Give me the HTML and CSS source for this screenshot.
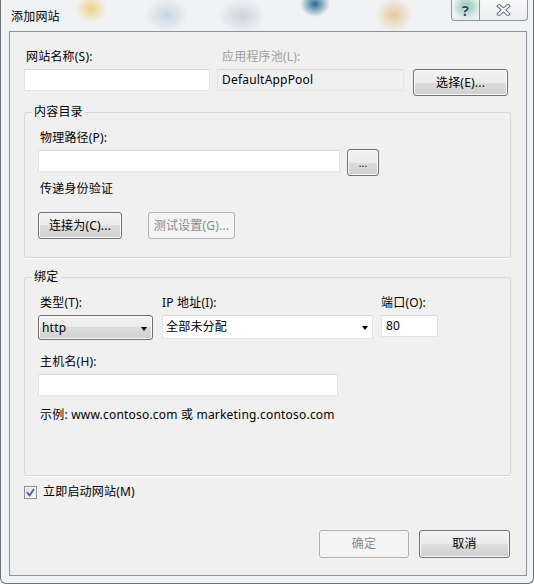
FILE: index.html
```html
<!DOCTYPE html>
<html lang="zh-CN">
<head>
<meta charset="utf-8">
<title>添加网站</title>
<link rel="stylesheet" href="styles.css">
</head>
<body>
<div class="window">
  <div class="titlebar">
    <span class="title">添加网站</span>
    <div class="caption-btns">
      <span class="cb help">?</span>
      <span class="cb close">
        <svg width="15" height="12" viewBox="0 0 15 12"><path d="M3 2 L12 10 M12 2 L3 10" stroke="#66707c" stroke-width="4" stroke-linecap="square" fill="none"/><path d="M3 2 L12 10 M12 2 L3 10" stroke="#ffffff" stroke-width="2" stroke-linecap="square" fill="none"/></svg>
      </span>
    </div>
  </div>
  <div class="client">
    <div class="top-grid">
      <label class="lbl l1">网站名称(S):</label>
      <label class="lbl l2 disabled">应用程序池(L):</label>
      <span></span>
      <div class="input"></div>
      <div class="input readonly">DefaultAppPool</div>
      <button class="btn select-btn">选择(E)...</button>
    </div>

    <div class="group g1">
      <div class="gh"><span>内容目录</span></div>
      <div class="gb">
        <div class="lbl ind">物理路径(P):</div>
        <div class="path-row">
          <div class="input path"></div>
          <button class="btn dots">...</button>
        </div>
        <div class="lbl ind pass">传递身份验证</div>
        <div class="btn-row">
          <button class="btn connect">连接为(C)...</button>
          <button class="btn test" disabled>测试设置(G)...</button>
        </div>
      </div>
    </div>

    <div class="group g2">
      <div class="gh"><span>绑定</span></div>
      <div class="gb">
        <div class="bind-grid">
          <div class="lbl ind">类型(T):</div>
          <div class="lbl">IP 地址(I):</div>
          <div class="lbl">端口(O):</div>
          <div class="combo type"><span>http</span><i class="arrow"></i></div>
          <div class="combo ip"><span>全部未分配</span><i class="arrow"></i></div>
          <div class="input port">80</div>
        </div>
        <div class="lbl ind host-lbl">主机名(H):</div>
        <div class="input host"></div>
        <div class="lbl ind example">示例: www.contoso.com 或 marketing.contoso.com</div>
      </div>
    </div>

    <div class="check-row">
      <span class="checkbox"><svg width="9" height="9" viewBox="0 0 9 9"><path d="M1 4.2 L3.6 7.4 L8 1" stroke="#4a5f96" stroke-width="1.8" fill="none"/></svg></span>
      <span class="lbl">立即启动网站(M)</span>
    </div>

    <div class="footer">
      <button class="btn ok" disabled>确定</button>
      <button class="btn cancel">取消</button>
    </div>
  </div>
</div>
</body>
</html>
```

FILE: styles.css
```css
* { box-sizing: border-box; }
html, body { margin: 0; padding: 0; background: #f2f3f4; }
body {
  font-family: "Noto Sans", "Noto Sans CJK SC", sans-serif;
  font-size: 12px;
  line-height: 16px;
  letter-spacing: 0.2px;
  color: #000;
}
.window {
  width: 534px;
  height: 584px;
  border: 1px solid #6e737a;
  border-top: none;
  border-radius: 0 0 6px 6px;
  padding: 0 6px 7px 8px;
  display: flex;
  flex-direction: column;
  background:
    radial-gradient(ellipse 16px 14px at 90px 9px, rgba(238,196,90,.7), rgba(238,196,90,0)),
    radial-gradient(ellipse 22px 17px at 166px 15px, rgba(168,188,212,.55), rgba(168,188,212,0)),
    radial-gradient(ellipse 24px 17px at 241px 16px, rgba(172,188,208,.55), rgba(172,188,208,0)),
    radial-gradient(ellipse 15px 13px at 314px 4px, rgba(18,92,132,.9), rgba(18,92,132,0)),
    radial-gradient(ellipse 19px 17px at 393px 15px, rgba(222,166,84,.55), rgba(222,166,84,0)),
    radial-gradient(ellipse 15px 15px at 466px 6px, rgba(60,160,120,.65), rgba(60,160,120,0)),
    #f1f2f4;
}
.titlebar {
  height: 31px;
  display: flex;
  align-items: flex-start;
  flex: none;
}
.title {
  padding-top: 9px;
  padding-left: 2px;
  line-height: 16px;
  color: #000;
}
.caption-btns {
  margin-left: auto;
  margin-right: -1px;
  display: flex;
  height: 21px;
  border: 1px solid #8d959f;
  border-top: none;
  border-radius: 0 0 4px 4px;
  overflow: hidden;
  background: linear-gradient(rgba(255,255,255,.55), rgba(230,234,238,.55));
}
.cb {
  display: flex;
  align-items: center;
  justify-content: center;
}
.help {
  width: 28px;
  border-right: 1px solid #8d959f;
  font-weight: bold;
  font-size: 15px;
  color: #2f4760;
  text-shadow: 0 0 2px #fff, 0 0 1px #fff;
  background: radial-gradient(ellipse 14px 12px at 14px 6px, rgba(80,170,140,.45), rgba(80,170,140,0));
}
.close { width: 47px; }

.client {
  height: 545px;
  border: 1px solid #8a929c;
  background: #f0f0f0;
  padding: 17px 15px 0 14px;
  display: flex;
  flex-direction: column;
}
.lbl { line-height: 16px; white-space: nowrap; }
.disabled { color: #a0a0a0; }

.top-grid {
  display: grid;
  grid-template-columns: 186px 187px 97px;
  column-gap: 7px;
  row-gap: 4px;
  align-items: start;
}
.top-grid .select-btn { margin-left: 2px; }
.l1 { padding-left: 2px; }
.l2 { padding-left: 5px; }

.input {
  height: 22px;
  background: #fff;
  border: 1px solid #e2e3ea;
  border-top-color: #d6d9df;
  padding: 2px 3px;
  line-height: 16px;
}
.input.readonly {
  background: #f0f0f0;
  border-color: #dadada #e6e6e6 #e6e6e6 #e3e3e3;
  padding-left: 4px;
}

.btn {
  font: inherit;
  letter-spacing: inherit;
  color: #000;
  height: 27px;
  border: 1px solid #707070;
  border-radius: 3px;
  background: linear-gradient(#f2f2f2 0%, #ebebeb 50%, #dddddd 50%, #cfcfcf 100%);
  box-shadow: inset 0 0 0 1px #fbfbfb;
  padding: 0;
  line-height: 16px;
}
.btn:disabled {
  border-color: #adb2b5;
  background: #f4f4f4;
  box-shadow: none;
  color: #8a8a8a;
}

.group { display: flex; flex-direction: column; }
.g1 { margin-top: 8px; }
.g2 { margin-top: 11px; }
.gh { display: flex; height: 16px; }
.gh::before, .gh::after {
  content: "";
  margin-top: 8px;
  height: 8px;
  border-top: 1px solid #d5dadf;
}
.gh::before {
  width: 7px;
  border-left: 1px solid #d5dadf;
  border-top-left-radius: 3px;
}
.gh::after {
  flex: 1;
  border-right: 1px solid #d5dadf;
  border-top-right-radius: 3px;
}
.gh span { padding: 0 2px; line-height: 16px; }
.gb {
  border: 1px solid #d5dadf;
  border-top: none;
  border-radius: 0 0 3px 3px;
  box-shadow: 0 1px 0 #fff;
  padding: 10px 13px 18px 13px;
}
.ind { padding-left: 2px; }

.path-row {
  display: flex;
  gap: 7px;
  margin-top: 3px;
  align-items: flex-start;
}
.input.path { width: 302px; margin-top: 1px; }
.btn.dots { width: 32px; font-size: 10px; line-height: 10px; }
.pass { margin-top: 5px; }
.btn-row { display: flex; gap: 26px; margin-top: 15px; }
.btn.connect { width: 84px; }
.btn.test { width: 87px; }

.bind-grid {
  display: grid;
  grid-template-columns: 115px 212px 57px;
  column-gap: 8px;
  row-gap: 4px;
  align-items: start;
}
.bind-grid > :nth-child(2), .bind-grid > :nth-child(5) { margin-left: 1px; }
.combo {
  display: flex;
  align-items: center;
  justify-content: space-between;
  padding: 0 5px 0 3px;
}
.combo.type {
  height: 25px;
  border: 1px solid #707070;
  border-radius: 3px;
  background: linear-gradient(#f2f2f2 0%, #ebebeb 50%, #dddddd 50%, #cfcfcf 100%);
  box-shadow: inset 0 0 0 1px #fbfbfb;
}
.combo.ip {
  height: 24px;
  background: #fff;
  border: 1px solid #e2e3ea;
  border-top-color: #d6d9df;
  padding-right: 4px;
}
.arrow {
  width: 0;
  height: 0;
  border-left: 3.5px solid transparent;
  border-right: 3.5px solid transparent;
  border-top: 4px solid #000;
  margin-top: 2px;
}
.input.port { width: 57px; padding-left: 4px; }
.host-lbl { margin-top: 14px; }
.input.host { width: 300px; margin-top: 4px; }
.example { margin-top: 11px; }
.g2 .gb { padding-bottom: 52px; }

.check-row {
  display: flex;
  align-items: center;
  gap: 6px;
  margin-top: 8px;
  height: 16px;
}
.checkbox {
  width: 13px;
  height: 13px;
  border: 1px solid #8f8f8f;
  background: linear-gradient(135deg, #dcdcdc, #fbfbfb);
  box-shadow: inset 0 0 0 1px #f4f4f4;
  display: flex;
  align-items: center;
  justify-content: center;
}
.footer {
  display: flex;
  justify-content: flex-end;
  gap: 10px;
  margin-top: 30px;
  padding-right: 1px;
}
.btn.ok { width: 90px; height: 28px; }
.btn.cancel { width: 91px; height: 28px; }
```
